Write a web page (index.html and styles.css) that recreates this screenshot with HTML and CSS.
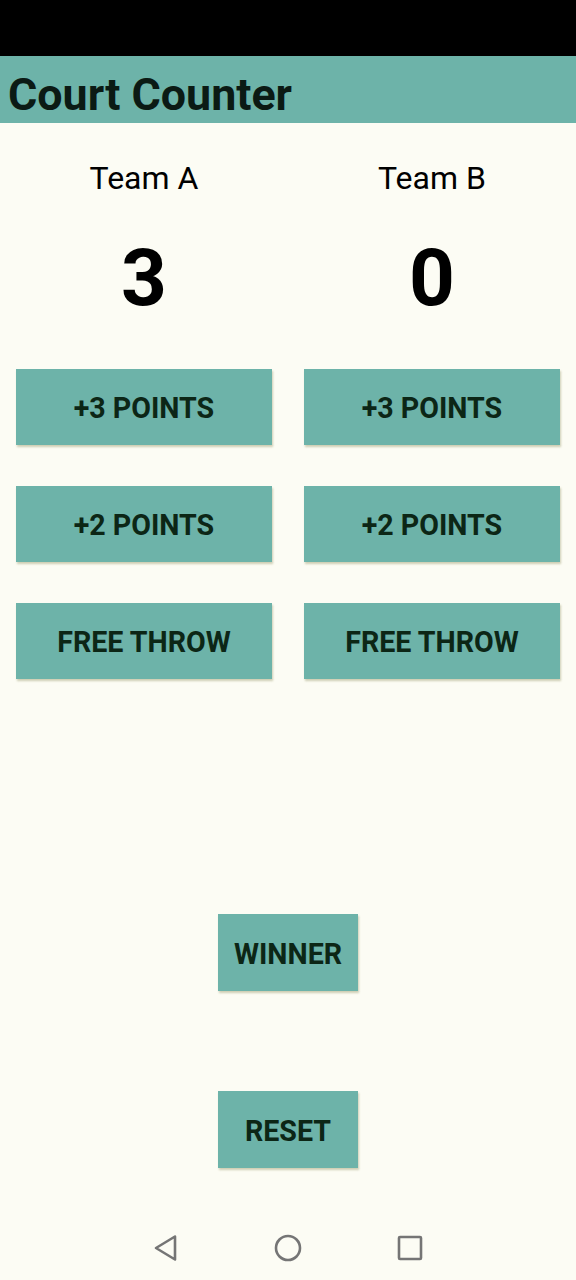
FILE: index.html
```html
<!DOCTYPE html>
<html>
<head>
<meta charset="utf-8">
<link rel="stylesheet" href="styles.css">
</head>
<body>
<div class="screen">
  <div class="status"></div>
  <header class="appbar"><h1 class="title">Court Counter</h1></header>
  <main class="content">
    <div class="teams">
      <section class="team">
        <div class="team-name">Team A</div>
        <div class="score">3</div>
        <div class="btn-stack">
          <button class="btn">+3 POINTS</button>
          <button class="btn">+2 POINTS</button>
          <button class="btn">FREE THROW</button>
        </div>
      </section>
      <section class="team">
        <div class="team-name">Team B</div>
        <div class="score">0</div>
        <div class="btn-stack">
          <button class="btn">+3 POINTS</button>
          <button class="btn">+2 POINTS</button>
          <button class="btn">FREE THROW</button>
        </div>
      </section>
    </div>
    <div class="actions">
      <button class="btn btn-small">WINNER</button>
      <button class="btn btn-small">RESET</button>
    </div>
  </main>
  <nav class="navbar">
    <svg class="nav-icon" width="28" height="28" viewBox="0 0 28 28"><path d="M23 2.5 L4 14 L23 25.5 Z" fill="none" stroke="#757575" stroke-width="2.6" stroke-linejoin="round"/></svg>
    <svg class="nav-icon" width="28" height="28" viewBox="0 0 28 28"><circle cx="14" cy="14" r="12" fill="none" stroke="#757575" stroke-width="2.6"/></svg>
    <svg class="nav-icon" width="28" height="28" viewBox="0 0 28 28"><rect x="3" y="3" width="22" height="22" rx="1" fill="none" stroke="#757575" stroke-width="2.6"/></svg>
  </nav>
</div>
</body>
</html>
```

FILE: styles.css
```css
html, body {
  margin: 0;
  padding: 0;
}
body {
  background: #fcfcf4;
  font-family: Roboto, "Liberation Sans", sans-serif;
}
.screen {
  width: 576px;
  height: 1280px;
  display: flex;
  flex-direction: column;
  background: #fcfcf4;
}
.status {
  height: 56px;
  background: #000;
  flex: none;
}
.appbar {
  height: 67px;
  flex: none;
  background: #6db3a9;
  display: flex;
  align-items: center;
  padding-left: 8px;
}
.title {
  margin: 0;
  font-size: 44.8px;
  font-weight: 700;
  color: #0b1a14;
  line-height: 1;
  padding-top: 11px;
}
.content {
  flex: 1;
  display: flex;
  flex-direction: column;
}
.teams {
  display: flex;
}
.team {
  width: 288px;
  box-sizing: border-box;
  padding: 35px 16px 0;
  display: flex;
  flex-direction: column;
  align-items: center;
}
.team-name {
  font-size: 32px;
  line-height: 40px;
  color: #000;
}
.score {
  margin-top: 32px;
  font-size: 80px;
  font-weight: 700;
  line-height: 96px;
  color: #000;
}
.btn-stack {
  margin-top: 43px;
  width: 100%;
  display: flex;
  flex-direction: column;
  gap: 41px;
}
.btn {
  border: none;
  background: #6db3a9;
  color: #0c2616;
  font-family: Roboto, "Liberation Sans", sans-serif;
  font-weight: 700;
  font-size: 28.6px;
  height: 76px;
  width: 256px;
  padding: 0;
  padding-top: 2px;
  box-shadow: 1px 2px 2px rgba(120, 120, 60, 0.35);
}
.actions {
  margin-top: 235px;
  display: flex;
  flex-direction: column;
  align-items: center;
  gap: 100px;
}
.btn-small {
  width: 140px;
  height: 77px;
}
.navbar {
  height: 64px;
  flex: none;
  display: flex;
  justify-content: center;
  align-items: center;
  gap: 94px;
  padding-bottom: 0;
}
.nav-icon {
  display: block;
}
```
